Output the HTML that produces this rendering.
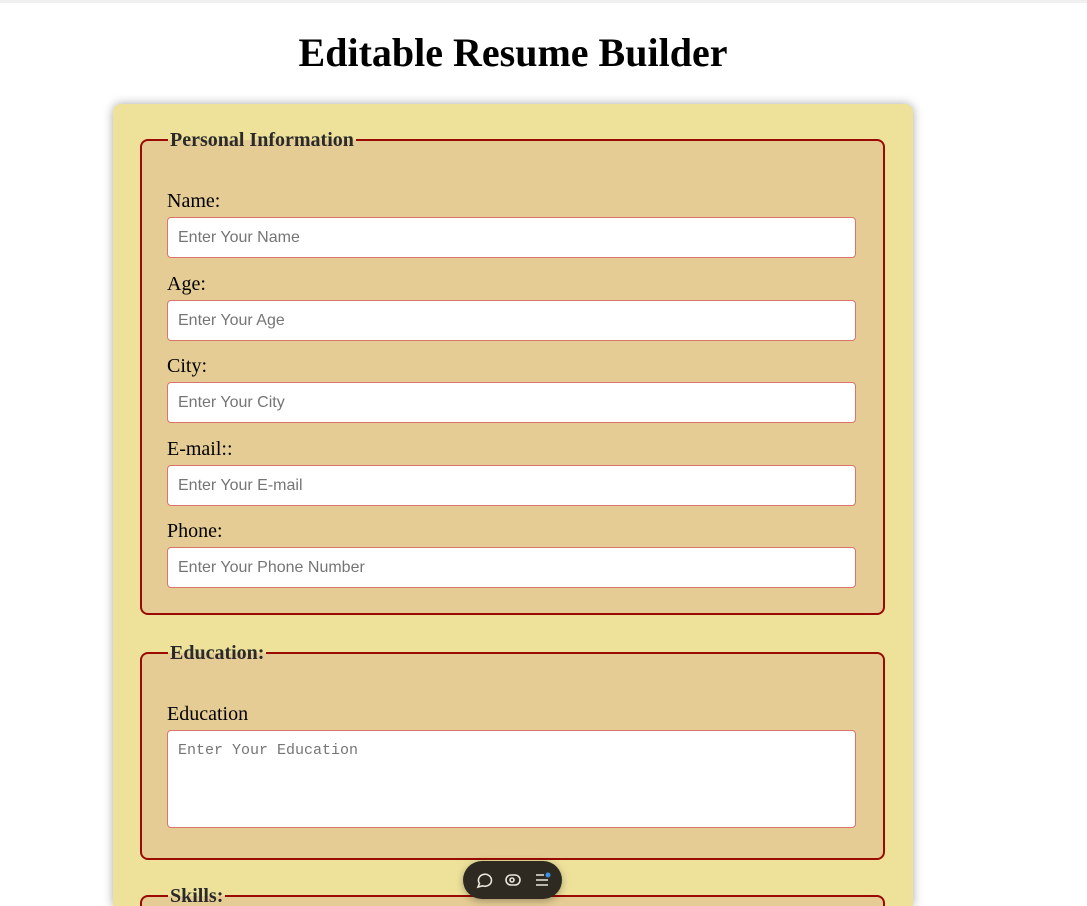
<!DOCTYPE html>
<html style="overflow:hidden;height:906px"><head><style>
body{margin:0;background:#fff;font-family:"Liberation Serif",serif;width:1087px;height:906px;overflow:hidden;position:relative}
.topline{position:absolute;left:0;top:0;width:1087px;height:3px;background:#f0f0f0}
h1{position:absolute;left:0;width:1026px;top:29px;margin:0;text-align:center;font-size:40px;font-weight:bold;line-height:48px}
.card{position:absolute;left:113px;top:104px;width:800px;height:802px;background:#eee29b;border-radius:8px 8px 0 0;box-shadow:0 0 10px rgba(0,0,0,.35)}
.fs{position:absolute;left:140px;width:741px;border:2px solid #9b0a00;border-radius:8px;background:#e5cc94}
.lg{position:absolute;left:26px;top:-11px;padding:0 2px;font-weight:bold;font-size:20px;color:#2a2a2a;line-height:20px;background:linear-gradient(#eee29b 50%,#e5cc94 50%)}
.lbl{position:absolute;left:167px;font-size:20px;line-height:22px}
.in{position:absolute;left:167px;width:687px;height:39px;border:1px solid #d9756a;border-radius:4px;background:#fff;font-family:"Liberation Sans",sans-serif;font-size:16px;color:#757575;box-sizing:content-box;line-height:39px;text-indent:10px}
.ta{font-family:"Liberation Mono",monospace;font-size:15px;line-height:20px;padding-top:10px;height:86px;box-sizing:border-box}
.pill{position:absolute;left:463px;top:861px;width:99px;height:38px;border-radius:19px;background:#2e2a22;box-shadow:0 2px 8px rgba(0,0,0,.3)}
</style></head><body>
<div class="topline"></div>
<h1>Editable Resume Builder</h1>
<div class="card"></div>
<div class="fs" style="top:139px;height:472px"><div class="lg">Personal Information</div></div>
<div class="lbl" style="top:190px">Name:</div>
<div class="in" style="top:217px">Enter Your Name</div>
<div class="lbl" style="top:273px">Age:</div>
<div class="in" style="top:300px">Enter Your Age</div>
<div class="lbl" style="top:355px">City:</div>
<div class="in" style="top:382px">Enter Your City</div>
<div class="lbl" style="top:438px">E-mail::</div>
<div class="in" style="top:465px">Enter Your E-mail</div>
<div class="lbl" style="top:520px">Phone:</div>
<div class="in" style="top:547px">Enter Your Phone Number</div>
<div class="fs" style="top:652px;height:204px"><div class="lg">Education:</div></div>
<div class="lbl" style="top:703px">Education</div>
<div class="in ta" style="top:730px;height:98px;width:689px">Enter Your Education</div>
<div class="fs" style="top:895px;height:40px"><div class="lg">Skills:</div></div>
<div class="pill">
<svg width="99" height="38" viewBox="0 0 99 38" fill="none" stroke="#e8e4da" stroke-width="1.6">
<path d="M15 26 L16.5 22.5 A6.5 6 0 1 1 19.5 24.8 Z"/>
<rect x="43" y="14" width="14" height="10" rx="5"/><circle cx="49" cy="19" r="2"/>
<path d="M73 14h8M73 19h12M73 24h12"/>
<circle cx="85" cy="14" r="2.5" fill="#3a8ee6" stroke="none"/>
</svg>
</div>
</body></html>
